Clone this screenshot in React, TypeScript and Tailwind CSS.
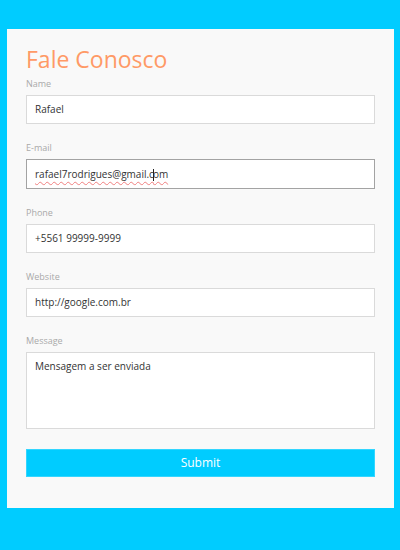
import React from 'react';

const fields = [
  { label: 'Name', value: 'Rafael' },
  { label: 'E-mail', value: 'rafael7rodrigues@gmail.com', focused: true },
  { label: 'Phone', value: '+5561 99999-9999' },
  { label: 'Website', value: 'http://google.com.br' },
];

function Field({ label, value, focused }: { label: string; value: string; focused?: boolean }) {
  return (
    <div className="flex flex-col">
      <label className="block text-[9px] leading-[16px] mb-[3px] text-[#a9a9a9]">{label}</label>
      <div
        className={
          focused
            ? 'h-[30px] flex items-center px-[8px] bg-white border border-[#a3a3a3] text-[10px] text-[#333]'
            : 'h-[29px] flex items-center px-[8px] bg-white border border-[#dadada] text-[10px] text-[#333]'
        }
      >
        {focused ? (
          <span className="underline decoration-wavy decoration-[#f08080] underline-offset-[3px]">
            rafael7rodrigues@gmail.c
            <span className="inline-block w-px h-[12px] bg-[#222] align-middle -mx-px" />
            om
          </span>
        ) : (
          <span>{value}</span>
        )}
      </div>
    </div>
  );
}

export default function App() {
  return (
    <div className="min-h-screen bg-[#00ccff] pt-[29px] pb-[42px]" style={{ fontFamily: '"Open Sans", sans-serif' }}>
      <div className="ml-[7px] w-[387px] bg-[#f9f9f9] px-[19px] pt-[16px] pb-[31px]">
        <h1 className="text-[23px] leading-[28px] mb-[3px] text-[#ff9a66] font-normal">Fale Conosco</h1>
        <form className="flex flex-col gap-[16px]">
          {fields.map((f) => (
            <Field key={f.label} label={f.label} value={f.value} focused={f.focused} />
          ))}
          <div className="flex flex-col">
            <label className="block text-[9px] leading-[16px] mb-[3px] text-[#a9a9a9]">Message</label>
            <div className="h-[77px] bg-white border border-[#dadada] px-[8px] pt-[6px] text-[10px] leading-[14px] text-[#333]">
              Mensagem a ser enviada
            </div>
          </div>
          <button
            type="button"
            className="mt-[4px] h-[28px] w-full bg-[#00ccff] border border-[#33d6ff] text-white text-[12px]"
          >
            Submit
          </button>
        </form>
      </div>
    </div>
  );
}
